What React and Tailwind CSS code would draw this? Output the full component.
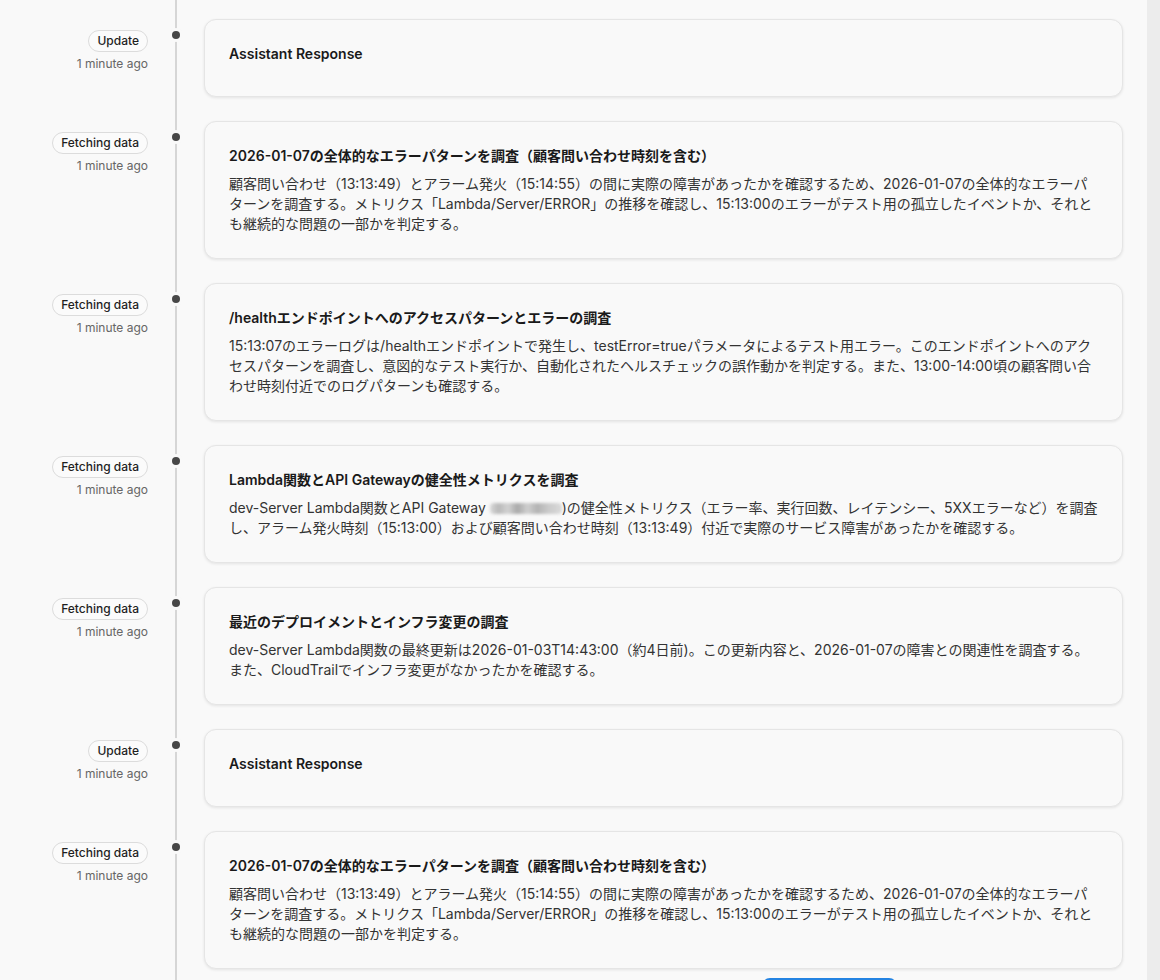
import React from "react";

const BODY_A = "顧客問い合わせ（13:13:49）とアラーム発火（15:14:55）の間に実際の障害があったかを確認するため、2026-01-07の全体的なエラーパターンを調査する。メトリクス「Lambda/Server/ERROR」の推移を確認し、15:13:00のエラーがテスト用の孤立したイベントか、それとも継続的な問題の一部かを判定する。";

const EVENTS = [
  { badge: "Update", title: "Assistant Response" },
  { badge: "Fetching data", title: "2026-01-07の全体的なエラーパターンを調査（顧客問い合わせ時刻を含む）", body: BODY_A },
  {
    badge: "Fetching data",
    title: "/healthエンドポイントへのアクセスパターンとエラーの調査",
    body: "15:13:07のエラーログは/healthエンドポイントで発生し、testError=trueパラメータによるテスト用エラー。このエンドポイントへのアクセスパターンを調査し、意図的なテスト実行か、自動化されたヘルスチェックの誤作動かを判定する。また、13:00-14:00頃の顧客問い合わせ時刻付近でのログパターンも確認する。",
  },
  { badge: "Fetching data", title: "Lambda関数とAPI Gatewayの健全性メトリクスを調査", gateway: true },
  {
    badge: "Fetching data",
    title: "最近のデプロイメントとインフラ変更の調査",
    body: "dev-Server Lambda関数の最終更新は2026-01-03T14:43:00（約4日前)。この更新内容と、2026-01-07の障害との関連性を調査する。また、CloudTrailでインフラ変更がなかったかを確認する。",
  },
  { badge: "Update", title: "Assistant Response" },
  { badge: "Fetching data", title: "2026-01-07の全体的なエラーパターンを調査（顧客問い合わせ時刻を含む）", body: BODY_A },
];

function GatewayBody() {
  return (
    <>
      dev-Server Lambda関数とAPI Gateway{" "}
      {/* redacted id, blurred in the source */}
      <span
        aria-hidden="true"
        className="inline-block align-[-1px] w-[72px] h-[11px] rounded-sm blur-[1.5px] bg-[linear-gradient(90deg,#d8d8d8_0%,#b9b9b9_12%,#d2d2d2_25%,#a9a9a9_38%,#cfcfcf_52%,#b3b3b3_66%,#c9c9c9_80%,#dadada_100%)]"
      />
      )の健全性メトリクス（エラー率、実行回数、レイテンシー、5XXエラーなど）を調査
      <br />
      し、アラーム発火時刻（15:13:00）および顧客問い合わせ時刻（13:13:49）付近で実際のサービス障害があったかを確認する。
    </>
  );
}

function Row({ ev }) {
  return (
    <div className="flex">
      <div className="w-[148px] shrink-0 flex flex-col items-end pt-[11px]">
        <span className="text-xs leading-4 px-2 py-0.5 rounded-full border border-[#dcdcdc] bg-[#fbfbfb] text-[#1f1f1f] font-medium">
          {ev.badge}
        </span>
        <span className="text-xs leading-4 mt-1 text-[#666]">1 minute ago</span>
      </div>
      <div className="w-14 shrink-0 flex justify-center pt-3">
        <div className="w-2 h-2 rounded-full bg-[#474747] ring-[3px] ring-[#f9f9f9]" />
      </div>
      <div className="flex-1 rounded-xl border border-[#e5e5e5] bg-[#f9f9f9] shadow-[0_1px_3px_rgba(0,0,0,0.09)] p-6">
        <div className="text-sm leading-5 font-semibold text-[#1a1a1a] mb-2">{ev.title}</div>
        <div className="text-sm leading-5 text-[#333]">
          {ev.gateway ? <GatewayBody /> : ev.body}
        </div>
      </div>
    </div>
  );
}

export default function App() {
  return (
    <div
      className="flex min-h-screen bg-[#f9f9f9] overflow-hidden"
      style={{ fontFamily: 'Inter, "Noto Sans CJK JP", sans-serif' }}
    >
      <main className="flex-1 relative pr-6">
        {/* timeline rail */}
        <div className="absolute left-[175px] top-0 bottom-0 w-[2px] bg-[#d6d6d6]" />
        <div className="relative flex flex-col gap-6 pt-[19px]">
          {EVENTS.map((ev, i) => (
            <Row key={i} ev={ev} />
          ))}
        </div>
        <div className="relative mt-[9px] ml-[762px] w-[135px] h-9 rounded-lg bg-[#2383e2]" />
      </main>
      <aside className="w-[13px] shrink-0 bg-[#ececec]" />
    </div>
  );
}
